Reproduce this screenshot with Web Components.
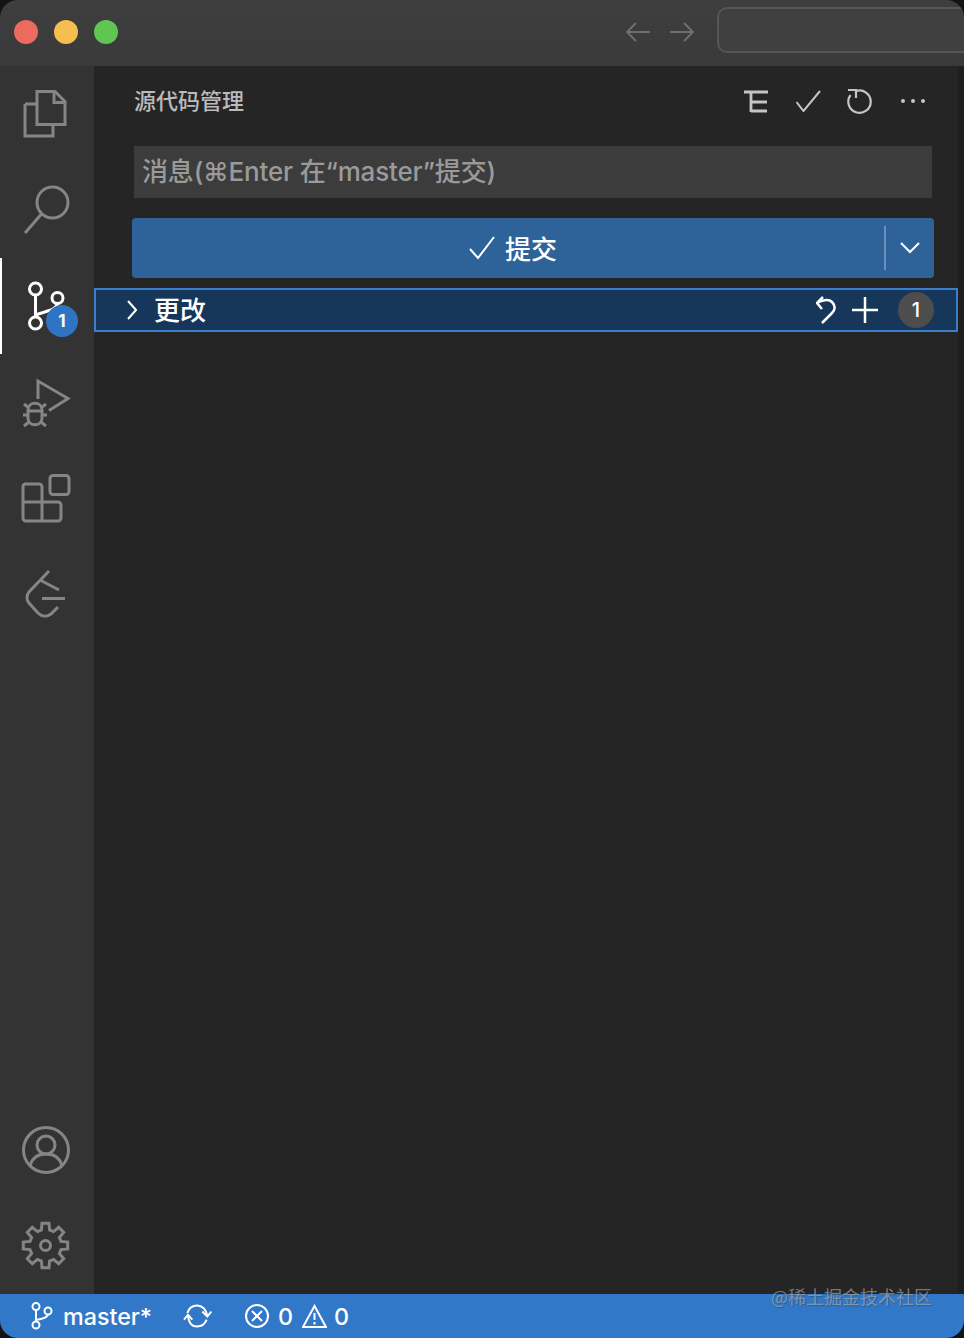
<!DOCTYPE html>
<html lang="zh">
<head>
<meta charset="utf-8">
<title>源代码管理</title>
<style>
  html, body { margin: 0; height: 100%; background: #141414; }
  body { font-family: Inter, "Noto Sans CJK SC", sans-serif; overflow: hidden; }
  vs-window { height: 1338px; }
</style>
</head>
<body>
<vs-window>
  <vs-titlebar slot="title"></vs-titlebar>
  <vs-activitybar slot="activity"></vs-activitybar>
  <vs-scm slot="panel" title-text="源代码管理" placeholder="消息(⌘Enter 在“master”提交)" commit="提交" group="更改" count="1"></vs-scm>
  <vs-statusbar slot="status" branch="master*"></vs-statusbar>
</vs-window>
<script>
const FONT = 'Inter, "Noto Sans CJK SC", sans-serif';

class VsWindow extends HTMLElement {
  connectedCallback() {
    this.attachShadow({ mode: 'open' });
    this.shadowRoot.innerHTML = `
      <style>
        :host { display: grid; grid-template-rows: 66px 1fr 44px; grid-template-columns: 94px 864px 6px;
          border-radius: 18px; overflow: hidden; position: relative; font-family: ${FONT}; }
        .gutter { background: #1f1f1f; }
        ::slotted([slot=title]), ::slotted([slot=status]) { grid-column: 1 / -1; }
        .mark { position: absolute; left: 771px; top: 1283px; font: 18px/26px "Noto Sans CJK SC", sans-serif;
          color: rgba(176,176,176,.62); text-shadow: 1px 1px 1px rgba(40,40,40,.35); white-space: nowrap; }
      </style>
      <slot name="title"></slot>
      <slot name="activity"></slot>
      <slot name="panel"></slot>
      <div class="gutter"></div>
      <slot name="status"></slot>
      <div class="mark">@稀土掘金技术社区</div>`;
  }
}

class VsTitlebar extends HTMLElement {
  connectedCallback() {
    this.attachShadow({ mode: 'open' });
    this.shadowRoot.innerHTML = `
      <style>
        :host { display: flex; align-items: center; height: 66px; box-sizing: border-box; padding: 0 0 2px 14px;
          background: linear-gradient(#3e3e3e, #3a3a3a); }
        .lights { display: flex; gap: 16px; }
        .lights i { width: 24px; height: 24px; border-radius: 50%; display: block; }
        .nav { margin-left: auto; display: flex; gap: 18px; margin-right: 22px; }
        .nav svg { display: block; }
        .box { width: 260px; height: 46px; margin: 0 -13px 4px 0; box-sizing: border-box; border: 2px solid #565656;
          border-radius: 10px; background: #404040; flex: none; }
      </style>
      <div class="lights">
        <i style="background:#ed6a5e"></i><i style="background:#f4bf4f"></i><i style="background:#61c554"></i>
      </div>
      <div class="nav">
        <svg width="26" height="24" viewBox="0 0 26 24" fill="none" stroke="#6e6e6e" stroke-width="2"><path d="M25 12H2M11 3l-9 9 9 9"/></svg>
        <svg width="26" height="24" viewBox="0 0 26 24" fill="none" stroke="#6e6e6e" stroke-width="2"><path d="M1 12h23M15 3l9 9-9 9"/></svg>
      </div>
      <div class="box"></div>`;
  }
}

class VsActivitybar extends HTMLElement {
  gearPoints() {
    // 8 teeth round (24,24)
    const pts = [];
    for (let k = 0; k < 8; k++) {
      const a = -90 + k * 45;
      [[-15, 16], [-9, 22.5], [9, 22.5], [15, 16]].forEach(([d, r]) => {
        const t = (a + d) * Math.PI / 180;
        pts.push((24 + r * Math.cos(t)).toFixed(1) + ',' + (24 + r * Math.sin(t)).toFixed(1));
      });
    }
    return pts.join(' ');
  }
  connectedCallback() {
    this.attachShadow({ mode: 'open' });
    this.shadowRoot.innerHTML = `
      <style>
        :host { display: flex; flex-direction: column; background: #333333; }
        .item { height: 96px; flex: none; position: relative; display: block; }
        .item svg { position: absolute; left: 0; top: 0; }
        .spacer { flex: 1; }
        .active::before { content: ""; position: absolute; left: 0; top: 0; width: 2px; height: 96px; background: #fff; z-index: 1; }
        .badge { position: absolute; left: 46px; top: 47px; width: 32px; height: 32px; border-radius: 50%;
          background: #2f74c2; color: #fff; font: 700 17px/32px Inter, sans-serif; text-align: center; }
        svg * { fill: none; stroke: #858585; stroke-width: 3; }
        .active svg * { stroke: #fff; }
      </style>
      <div class="item">
        <svg width="94" height="96" viewBox="0 66 94 96">
          <path d="M25 104h12M25 104v32h28v-11"/>
          <path d="M37 91.500h18l10 10v23H37z"/>
          <path d="M54 91.500v11h11"/>
        </svg>
      </div>
      <div class="item">
        <svg width="94" height="96" viewBox="0 162 94 96">
          <circle cx="52.500" cy="202.500" r="15.500"/><path d="M41.500 214L25 233"/>
        </svg>
      </div>
      <div class="item active">
        <svg width="94" height="96" viewBox="0 258 94 96">
          <circle cx="35.500" cy="289" r="6"/><circle cx="57.500" cy="298" r="5.500"/><circle cx="35.500" cy="323" r="6"/>
          <path d="M35.500 295v22M35.500 315c10-4 20-4 22-11.500"/>
        </svg>
        <div class="badge">1</div>
      </div>
      <div class="item">
        <svg width="94" height="96" viewBox="0 354 94 96">
          <path d="M38 399V381l30 17.500-19 12"/>
          <path d="M28 410c0-9 14-9 14 0v8c0 9-14 9-14 0z"/>
          <path d="M28 411h14M24 404l5 4M46 404l-5 4M23 415h5M47 415h-5M24 426l5-4M46 426l-5-4"/>
        </svg>
      </div>
      <div class="item">
        <svg width="94" height="96" viewBox="0 450 94 96">
          <rect x="50" y="475.500" width="19" height="19" rx="3"/>
          <path d="M25 484h14a3 3 0 0 1 3 3v15h16a3 3 0 0 1 3 3v13a3 3 0 0 1-3 3H26a3 3 0 0 1-3-3v-31a3 3 0 0 1 2-3z"/>
          <path d="M23 502h19M42 502v19"/>
        </svg>
      </div>
      <div class="item">
        <svg width="94" height="96" viewBox="0 546 94 96">
          <path d="M49 571L29 592c-3 4-3 7 0 11l9 10c4 4 9 4 13 1l7-7"/>
          <path d="M40 580l19 10M42 598.500h23"/>
        </svg>
      </div>
      <div class="spacer"></div>
      <div class="item">
        <svg width="94" height="96" viewBox="0 1102 94 96">
          <circle cx="46" cy="1150" r="22.500"/><circle cx="46" cy="1145" r="9"/>
          <path d="M30 1166c2-8 8-12 16-12s14 4 16 12"/>
        </svg>
      </div>
      <div class="item">
        <svg width="94" height="96" viewBox="0 0 94 96">
          <g transform="translate(21.500,23.500)"><polygon points="${this.gearPoints()}"/><circle cx="24" cy="24" r="5"/></g>
        </svg>
      </div>`;
  }
}

class VsScm extends HTMLElement {
  connectedCallback() {
    const a = n => this.getAttribute(n);
    this.attachShadow({ mode: 'open' });
    this.shadowRoot.innerHTML = `
      <style>
        :host { display: block; background: #252526; }
        header { display: flex; align-items: center; height: 70px; box-sizing: border-box; padding: 0 32px 0 40px; }
        h1 { margin: 0; padding-bottom: 4px; font: 500 22px/30px "Noto Sans CJK SC", sans-serif; color: #bbbbbb; flex: 1; }
        .tools { display: flex; align-items: center; }
        .tools svg { display: block; }
        .msg { margin: 10px 26px 0 40px; height: 52px; background: #3c3c3c; color: #9a9a9a; box-sizing: border-box;
          padding-left: 8px; font-size: 26px; font-weight: 500; line-height: 52px; white-space: nowrap; letter-spacing: -.18px; }
        .commit { margin: 20px 24px 0 38px; height: 60px; background: #2e639a; border-radius: 4px; color: #fff;
          display: flex; align-items: center; }
        .commit .main { flex: 1; display: flex; align-items: center; justify-content: center; gap: 10px; font-size: 26px;
          font-weight: 500; padding-left: 10px; }
        .commit .main span { padding-bottom: 2px; }
        .commit .sep { width: 2px; height: 44px; background: #6a90ba; }
        .commit .drop { width: 48px; display: flex; justify-content: center; }
        .row { margin-top: 10px; height: 44px; box-sizing: border-box; border: 2px solid #3b7fcb; background: #16375a;
          display: flex; align-items: center; color: #fff; padding: 0 22px 0 31px; }
        .row .name { font-size: 26px; font-weight: 500; margin-left: 17px; flex: 1; padding-bottom: 4px; }
        .count { width: 36px; height: 36px; border-radius: 50%; background: #4d4d4d; font: 500 20px/36px Inter, sans-serif;
          text-align: center; margin-left: 20px; }
        svg { flex: none; }
      </style>
      <header>
        <h1>${a('title-text')}</h1>
        <div class="tools">
          <svg width="24" height="24" viewBox="0 0 24 24" fill="none" stroke="#c5c5c5" stroke-width="2.800"><path d="M0 3h24M7 3v20M7 13h16M7 22h16"/></svg>
          <svg width="25" height="22" viewBox="0 0 25 22" style="margin-left:28px" fill="none" stroke="#c5c5c5" stroke-width="2"><path d="M0.500 12l7 9L24 1"/></svg>
          <svg width="26" height="26" viewBox="0 0 26 26" style="margin-left:26px" fill="none" stroke="#c5c5c5" stroke-width="2.200"><path d="M9 3a11.200 11.200 0 1 1-5.500 4"/><path d="M1 2h8v8"/></svg>
          <svg width="26" height="6" viewBox="0 0 26 6" style="margin-left:27px" fill="#c5c5c5"><circle cx="3" cy="3" r="2"/><circle cx="13" cy="3" r="2"/><circle cx="23" cy="3" r="2"/></svg>
        </div>
      </header>
      <div class="msg">${a('placeholder')}</div>
      <div class="commit">
        <div class="main">
          <svg width="26" height="24" viewBox="0 0 26 24" fill="none" stroke="#fff" stroke-width="2"><path d="M1 13l8 9L25 1"/></svg>
          <span>${a('commit')}</span>
        </div>
        <div class="sep"></div>
        <div class="drop"><svg width="20" height="12" viewBox="0 0 20 12" fill="none" stroke="#fff" stroke-width="2"><path d="M1 1l9 9 9-9"/></svg></div>
      </div>
      <div class="row">
        <svg width="10" height="20" viewBox="0 0 10 20" fill="none" stroke="#fff" stroke-width="2"><path d="M1 1l8 9-8 9"/></svg>
        <span class="name">${a('group')}</span>
        <svg width="20" height="28" viewBox="0 0 20 28" fill="none" stroke="#fff" stroke-width="2.500"><path d="M1 7C7 4 13 3 16 6C20 10 19 14 16 17L6 27"/><path d="M7 1L1 7l5 6"/></svg>
        <svg width="26" height="26" viewBox="0 0 26 26" style="margin-left:16px" fill="none" stroke="#fff" stroke-width="2.500"><path d="M0 13h26M13 0v26"/></svg>
        <div class="count">${a('count')}</div>
      </div>`;
  }
}

class VsStatusbar extends HTMLElement {
  connectedCallback() {
    this.attachShadow({ mode: 'open' });
    this.shadowRoot.innerHTML = `
      <style>
        :host { display: flex; align-items: center; background: #3178c8; color: #fff; padding-left: 31px;
          font: 500 23.300px/42px Inter, sans-serif; }
        svg { display: block; flex: none; }
        span { padding-top: 2px; }
        .branch { margin-left: 10px; }
        .num { margin: 0 9px; }
        .num.last { margin-left: 7px; }
      </style>
      <svg width="22" height="28" viewBox="0 0 22 28" fill="none" stroke="#fff" stroke-width="2">
        <circle cx="5" cy="4.500" r="3.500"/><circle cx="17" cy="9" r="3.500"/><circle cx="5" cy="23" r="3.500"/>
        <path d="M5 8v11M5 18c6-1 11-2 12-5.500"/>
      </svg>
      <span class="branch">${this.getAttribute('branch')}</span>
      <svg width="29" height="24" viewBox="0 0 29 24" style="margin-left:31px" fill="none" stroke="#fff" stroke-width="2">
        <path d="M4.300 9C6 4 10 1.500 14 1.500c5 0 9.500 4 10.300 10.500"/><path d="M19.300 7.500l5 5 4-5"/>
        <path d="M23.700 15.700C22 20 18 22.500 14 22.500c-5 0-8.500-4-9-11.500"/><path d="M1 15.700l4-5 4.300 5"/>
      </svg>
      <svg width="24" height="24" viewBox="0 0 24 24" style="margin-left:33px" fill="none" stroke="#fff" stroke-width="2">
        <circle cx="12" cy="12" r="11"/><path d="M7 7l10 10M17 7L7 17"/>
      </svg>
      <span class="num">0</span>
      <svg width="25" height="24" viewBox="0 0 25 24" fill="none" stroke="#fff" stroke-width="2">
        <path d="M12.500 2L24 23H1z"/><path d="M12.500 9v7M12.500 18v2.500"/>
      </svg>
      <span class="num last">0</span>`;
  }
}

customElements.define('vs-window', VsWindow);
customElements.define('vs-titlebar', VsTitlebar);
customElements.define('vs-activitybar', VsActivitybar);
customElements.define('vs-scm', VsScm);
customElements.define('vs-statusbar', VsStatusbar);
</script>
</body>
</html>
